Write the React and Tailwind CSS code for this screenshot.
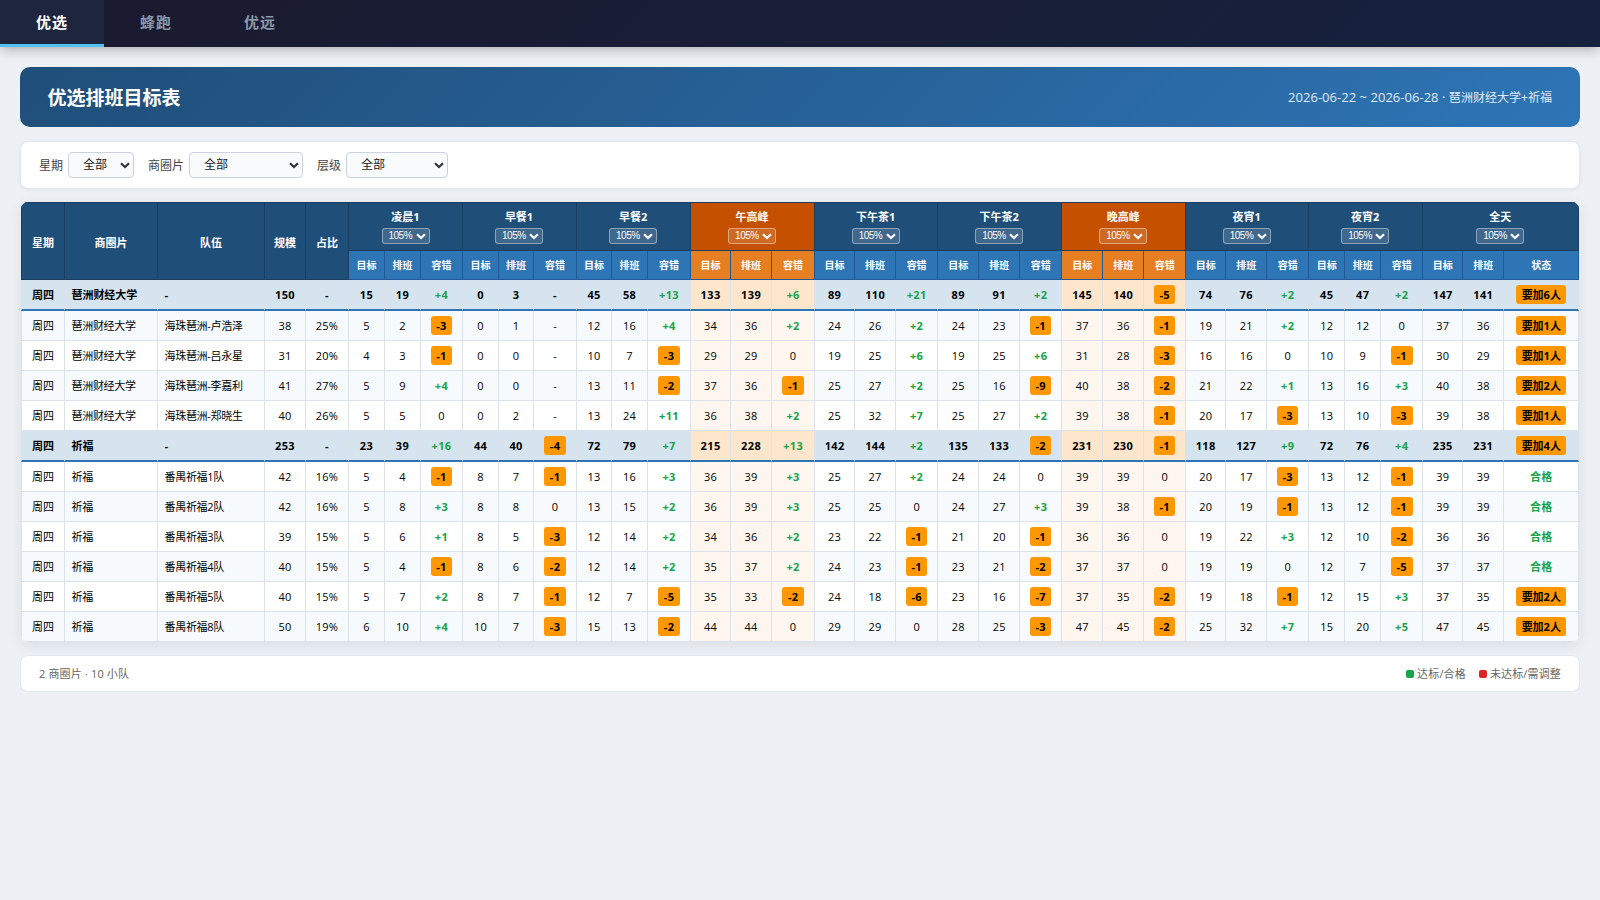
import React, { useState } from 'react';
import clsx from 'clsx';

const TABS = ['优选', '蜂跑', '优远'];

const PERIODS = [
  { name: '凌晨1' },
  { name: '早餐1' },
  { name: '早餐2' },
  { name: '午高峰', peak: true },
  { name: '下午茶1' },
  { name: '下午茶2' },
  { name: '晚高峰', peak: true },
  { name: '夜宵1' },
  { name: '夜宵2' },
  { name: '全天', total: true },
];

const COLUMN_WIDTHS = [
  44, 93, 107, 41, 43,
  36, 36, 42,
  36, 35, 43,
  35, 36, 43,
  40, 41, 43,
  40, 41, 42,
  41, 41, 42,
  41, 41, 42,
  40, 41, 42,
  36, 36, 42,
  40, 41, 75,
];

const PZ = '琶洲财经大学';
const QF = '祈福';

// area, team, size, share, then target/scheduled/tolerance for every period
const ROWS = [
  { area: PZ, team: '-', size: 150, share: '-', summary: true, values: '15 19 +4 0 3 - 45 58 +13 133 139 +6 89 110 +21 89 91 +2 145 140 -5 74 76 +2 45 47 +2 147 141 要加6人' },
  { area: PZ, team: '海珠琶洲-卢浩泽', size: 38, share: '25%', values: '5 2 -3 0 1 - 12 16 +4 34 36 +2 24 26 +2 24 23 -1 37 36 -1 19 21 +2 12 12 0 37 36 要加1人' },
  { area: PZ, team: '海珠琶洲-吕永星', size: 31, share: '20%', values: '4 3 -1 0 0 - 10 7 -3 29 29 0 19 25 +6 19 25 +6 31 28 -3 16 16 0 10 9 -1 30 29 要加1人' },
  { area: PZ, team: '海珠琶洲-李嘉利', size: 41, share: '27%', values: '5 9 +4 0 0 - 13 11 -2 37 36 -1 25 27 +2 25 16 -9 40 38 -2 21 22 +1 13 16 +3 40 38 要加2人' },
  { area: PZ, team: '海珠琶洲-郑晓生', size: 40, share: '26%', values: '5 5 0 0 2 - 13 24 +11 36 38 +2 25 32 +7 25 27 +2 39 38 -1 20 17 -3 13 10 -3 39 38 要加1人' },
  { area: QF, team: '-', size: 253, share: '-', summary: true, values: '23 39 +16 44 40 -4 72 79 +7 215 228 +13 142 144 +2 135 133 -2 231 230 -1 118 127 +9 72 76 +4 235 231 要加4人' },
  { area: QF, team: '番禺祈福1队', size: 42, share: '16%', values: '5 4 -1 8 7 -1 13 16 +3 36 39 +3 25 27 +2 24 24 0 39 39 0 20 17 -3 13 12 -1 39 39 合格' },
  { area: QF, team: '番禺祈福2队', size: 42, share: '16%', values: '5 8 +3 8 8 0 13 15 +2 36 39 +3 25 25 0 24 27 +3 39 38 -1 20 19 -1 13 12 -1 39 39 合格' },
  { area: QF, team: '番禺祈福3队', size: 39, share: '15%', values: '5 6 +1 8 5 -3 12 14 +2 34 36 +2 23 22 -1 21 20 -1 36 36 0 19 22 +3 12 10 -2 36 36 合格' },
  { area: QF, team: '番禺祈福4队', size: 40, share: '15%', values: '5 4 -1 8 6 -2 12 14 +2 35 37 +2 24 23 -1 23 21 -2 37 37 0 19 19 0 12 7 -5 37 37 合格' },
  { area: QF, team: '番禺祈福5队', size: 40, share: '15%', values: '5 7 +2 8 7 -1 12 7 -5 35 33 -2 24 18 -6 23 16 -7 37 35 -2 19 18 -1 12 15 +3 37 35 要加2人' },
  { area: QF, team: '番禺祈福8队', size: 50, share: '19%', values: '6 10 +4 10 7 -3 15 13 -2 44 44 0 29 29 0 28 25 -3 47 45 -2 25 32 +7 15 20 +5 47 45 要加2人' },
];

function Chevron({ className }) {
  return (
    <svg viewBox="0 0 10 7" fill="none" stroke="currentColor" strokeWidth="2.2" className={className}>
      <path d="M1 1.2 L5 5 L9 1.2" />
    </svg>
  );
}

function FilterSelect({ label, width }) {
  return (
    <div className="flex items-center gap-[5px]">
      <span className="pt-px text-[12px] text-[#444]">{label}</span>
      <button
        className={clsx(
          'flex h-[26px] items-center justify-between rounded-[4px] border border-[#ccd3e0] bg-[#f8fafc] pr-[3px] pl-[14px] text-[12px] leading-[22px] text-[#222]',
          width
        )}
      >
        <span className="pb-px">全部</span>
        <Chevron className="h-[7px] w-[10px] text-[#333]" />
      </button>
    </div>
  );
}

function RateSelect() {
  return (
    <button className="mx-auto mt-[3px] flex h-4 w-12 items-center justify-between rounded-[3px] border border-white/40 bg-white/15 pr-[3px] pl-[6px] font-['Liberation_Sans',sans-serif] text-[10px] leading-none font-normal tracking-[-0.5px] text-white">
      <span>105%</span>
      <Chevron className="h-[7px] w-[10px]" />
    </button>
  );
}

function ValueCell({ value, index, row }) {
  const period = PERIODS[Math.floor(index / 3)];
  const isResult = index % 3 === 2;
  const bad = isResult && (/^-\d/.test(value) || value.startsWith('要加'));
  const good = isResult && (value.startsWith('+') || value === '合格');

  return (
    <td
      className={clsx(
        'border-r border-[#dbe2ec] p-0 text-center',
        row.summary ? 'border-b-2 border-b-[#2e75b6]' : 'border-b',
        period.peak && (row.summary ? 'bg-[#fde6cc]' : 'bg-[#fff7ef]')
      )}
    >
      {bad ? (
        <span
          className={clsx(
            'mx-auto block h-[19px] rounded-[3px] bg-[#ff9800] leading-[19px] font-bold text-black',
            period.total ? 'w-[50px]' : 'w-[21.5px] tracking-[0.3px]'
          )}
        >
          {value}
        </span>
      ) : (
        <span className={clsx(good || row.summary ? 'tracking-[0.35px]' : 'tracking-[0.2px]', good && 'font-bold text-[#16a34a]')}>
          {value}
        </span>
      )}
    </td>
  );
}

function ScheduleTable() {
  return (
    <table className="w-[1558px] table-fixed border-separate border-spacing-0 overflow-hidden rounded-[7px] bg-white text-[11px] leading-[16px] whitespace-nowrap text-black shadow-[0_4px_16px_rgba(0,0,0,0.08)]">
      <colgroup>
        {COLUMN_WIDTHS.map((w, i) => (
          <col key={i} style={{ width: w }} />
        ))}
      </colgroup>
      <thead className="text-white">
        <tr className="h-[49px] bg-[#1f4e79]">
          {['星期', '商圈片', '队伍', '规模', '占比'].map((title) => (
            <th
              key={title}
              rowSpan={2}
              className="border-t border-r border-b border-[#1a3f63] p-0 pt-[3px] first:border-l"
            >
              {title}
            </th>
          ))}
          {PERIODS.map((p) => (
            <th
              key={p.name}
              colSpan={3}
              className={clsx(
                'border-t border-r border-b border-[#1a3f63] p-0 align-top not-nth-6:pr-px',
                p.peak && 'bg-[#c55000]'
              )}
            >
              <div className="pt-[6px]">{p.name}</div>
              <RateSelect />
            </th>
          ))}
        </tr>
        <tr className="h-[29px] bg-[#2e75b6] text-[10px]">
          {PERIODS.map((p) =>
            ['目标', '排班', p.total ? '状态' : '容错'].map((title) => (
              <th
                key={p.name + title}
                className={clsx(
                  'border-r border-b border-[#1f5a96] p-0',
                  p.peak && 'bg-[#e67e22]'
                )}
              >
                {title}
              </th>
            ))
          )}
        </tr>
      </thead>
      <tbody>
        {ROWS.map((row, i) => {
          const border = row.summary ? 'border-b-2 border-b-[#2e75b6]' : 'border-b';
          const tracking = row.summary ? 'tracking-[-0.05px]' : 'tracking-[-0.3px]';
          const digits = row.summary ? 'tracking-[0.35px]' : 'tracking-[0.2px]';
          return (
            <tr
              key={i}
              className={clsx(
                row.summary ? 'h-[31px] bg-[#d6e4f0] font-bold' : 'h-[30px]',
                !row.summary && (i % 2 === 1 ? 'bg-[#f7fafd]' : 'bg-white')
              )}
            >
              <td className={clsx('border-r border-l border-[#dbe2ec] p-0 text-center', border)}>周四</td>
              <td className={clsx('border-r border-[#dbe2ec] py-0 pr-0 pl-[6.5px]', border, tracking)}>{row.area}</td>
              <td className={clsx('border-r border-[#dbe2ec] py-0 pr-0 pl-[6.5px]', border, tracking)}>{row.team}</td>
              <td className={clsx('border-r border-[#dbe2ec] p-0 text-center', border, digits)}>{row.size}</td>
              <td className={clsx('border-r border-[#dbe2ec] p-0 text-center', border, digits)}>{row.share}</td>
              {row.values.split(' ').map((value, index) => (
                <ValueCell key={index} value={value} index={index} row={row} />
              ))}
            </tr>
          );
        })}
      </tbody>
    </table>
  );
}

export default function App() {
  const [active, setActive] = useState(0);

  return (
    <div className="min-h-screen bg-[#edf0f5] font-['Open_Sans','Noto_Sans_CJK_SC',sans-serif]">
      <nav className="flex h-[47px] bg-linear-135 from-[#1a1a2e] to-[#16213e] shadow-[0_2px_12px_rgba(0,0,0,0.3)]">
        {TABS.map((tab, i) => (
          <button
            key={tab}
            onClick={() => setActive(i)}
            className={clsx(
              'w-[104px] border-b-[3px] text-[15px] leading-[44px] font-bold tracking-[1px]',
              i === active
                ? 'border-[#4fc3f7] bg-[#4fc3f7]/8 text-white'
                : 'border-transparent text-[#8899aa]'
            )}
          >
            {tab}
          </button>
        ))}
      </nav>

      <main className="px-5 pt-5">
        <header className="flex h-[60px] items-center justify-between rounded-[10px] bg-linear-135 from-[#1f4e79] to-[#2e75b6] pt-[2px] pr-7 pl-[27.5px] text-white">
          <h1 className="text-[19px] font-bold">优选排班目标表</h1>
          <span className="text-[13px] tracking-[0.03px] text-white/85">
            2026-06-22 ~ 2026-06-28 · <span className="text-[12px]">琶洲财经大学+祈福</span>
          </span>
        </header>

        {/* Filters */}
        <div className="mt-[14px] flex h-12 items-center gap-[14px] rounded-[8px] border border-[#e2e8f0] bg-white px-[18px] shadow-[0_1px_4px_rgba(0,0,0,0.05)]">
          <FilterSelect label="星期" width="w-[66px]" />
          <FilterSelect label="商圈片" width="w-[114px]" />
          <FilterSelect label="层级" width="w-[102px]" />
        </div>

        <div className="mt-[13px] px-px">
          <ScheduleTable />
        </div>

        {/* Legend */}
        <footer className="mt-[13px] flex h-[37px] items-center justify-between rounded-[8px] border border-[#e2e8f0] bg-white px-[18px] pt-px text-[11px] tracking-[0.15px] text-[#666]">
          <span>2 商圈片 · 10 小队</span>
          <div className="flex gap-[13px]">
            <span className="flex items-center gap-[3px]">
              <i className="size-2 rounded-[2px] bg-[#16a34a]" />
              达标/合格
            </span>
            <span className="flex items-center gap-[3px]">
              <i className="size-2 rounded-[2px] bg-[#dc2626]" />
              未达标/需调整
            </span>
          </div>
        </footer>
      </main>
    </div>
  );
}
